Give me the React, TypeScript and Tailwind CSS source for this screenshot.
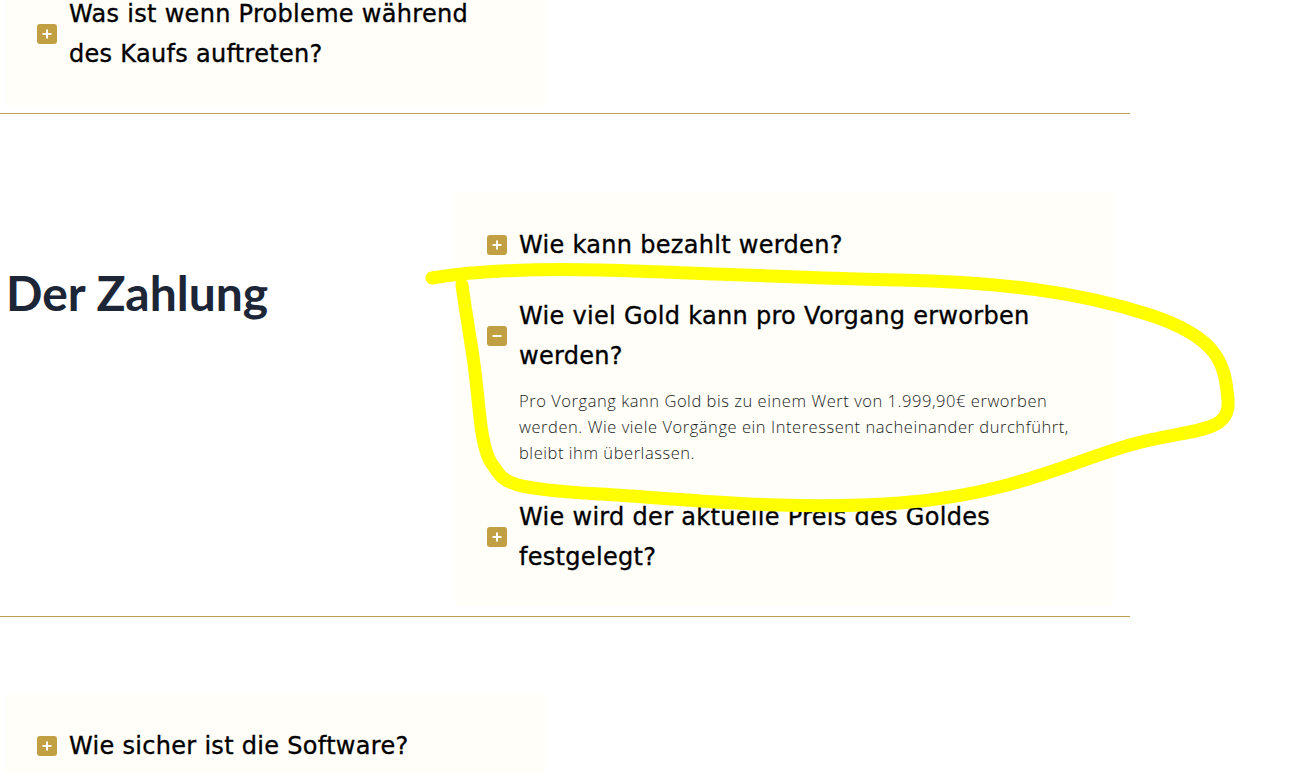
import React from 'react';

const questionFont = {
  fontFamily: '"DejaVu Sans", "Noto Sans", sans-serif',
  letterSpacing: '0.3px',
  WebkitTextStroke: '0.35px #000',
};

function ToggleIcon({ open }: { open?: boolean }) {
  return (
    <span className="flex h-5 w-5 shrink-0 items-center justify-center rounded-[3px] bg-[#c1a043]">
      <svg width="10" height="10" viewBox="0 0 10 10">
        <rect x="0.5" y="4" width="9" height="2" fill="#fff" />
        {!open && <rect x="4" y="0.5" width="2" height="9" fill="#fff" />}
      </svg>
    </span>
  );
}

function Question({ text, open }: { text: string; open?: boolean }) {
  return (
    <div className="flex items-center gap-3">
      <ToggleIcon open={open} />
      <h4 className="text-[24px] leading-[40px] text-black" style={questionFont}>
        {text}
      </h4>
    </div>
  );
}

function Panel({ children, className }: { children: React.ReactNode; className?: string }) {
  return <div className={`bg-[#fffef8] px-8 ${className ?? ''}`}>{children}</div>;
}

function Rule() {
  return <div className="h-px w-full bg-[#b9a24f]" />;
}

export default function App() {
  return (
    <div className="relative min-h-[773px] overflow-hidden bg-white" style={{ fontFamily: 'Lato, sans-serif' }}>
      <div className="w-[1130px]">
        {/* Kauf */}
        <div className="pb-2">
          <Panel className="ml-[5px] mt-[-40px] w-[540px] pt-[34px] pb-[31px]">
            <Question text="Was ist wenn Probleme während des Kaufs auftreten?" />
          </Panel>
        </div>
        <Rule />

        {/* Zahlung */}
        <div className="flex pt-[78px] pb-[10px]">
          <div className="w-[455px] shrink-0 pl-[6px] pt-[72px]">
            <h2 className="text-[48px] font-bold leading-[58px] text-[#1c2636]">Der Zahlung</h2>
          </div>
          <Panel className="w-[658px] pt-[33px] pb-[29px]">
            <div className="flex flex-col gap-[31px]">
              <Question text="Wie kann bezahlt werden?" />
              <div>
                <Question text="Wie viel Gold kann pro Vorgang erworben werden?" open />
                <p
                  className="mt-3 pl-8 text-[16.5px] leading-[26px] font-light tracking-[0.55px] text-[#1a1a1a]"
                  style={{ fontFamily: '"Open Sans", sans-serif' }}
                >
                  Pro Vorgang kann Gold bis zu einem Wert von 1.999,90€ erworben werden. Wie viele Vorgänge ein
                  Interessent nacheinander durchführt, bleibt ihm überlassen.
                </p>
              </div>
              <Question text="Wie wird der aktuelle Preis des Goldes festgelegt?" />
            </div>
          </Panel>
        </div>
        <Rule />

        {/* Software */}
        <div className="pt-[78px]">
          <Panel className="ml-[5px] w-[540px] pt-[31px] pb-[31px]">
            <Question text="Wie sicher ist die Software?" />
          </Panel>
        </div>
      </div>

      {/* hand-drawn highlight */}
      <svg className="pointer-events-none absolute left-0 top-0" width="1297" height="773">
        <path
          d="M432 278 C 470 272, 520 268, 600 270 S 800 278, 900 280 S 1080 292, 1150 315 S 1225 365, 1228 400 S 1190 428, 1130 445 S 1010 495, 900 503 S 700 500, 600 494 S 505 482, 492 464 S 480 400, 472 350 S 464 300, 462 285"
          fill="none"
          stroke="#ffff00"
          strokeWidth="13"
          strokeLinecap="round"
          strokeLinejoin="round"
        />
      </svg>
    </div>
  );
}
